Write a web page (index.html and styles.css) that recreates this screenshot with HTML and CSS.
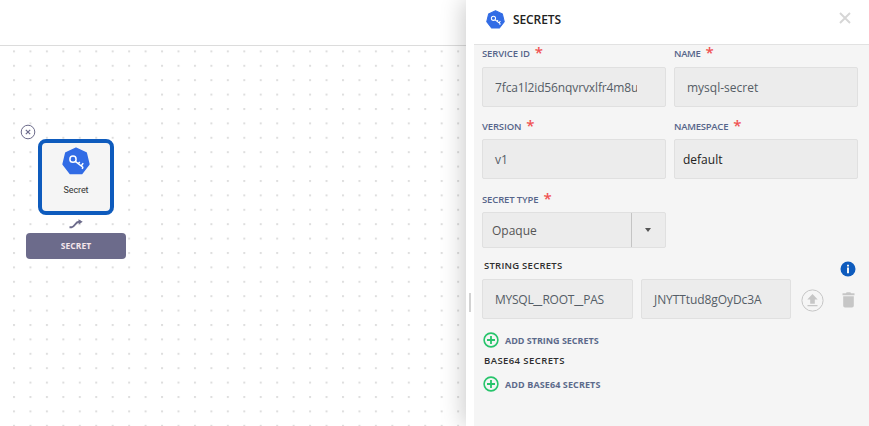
FILE: index.html
```html
<!DOCTYPE html>
<html lang="en">
<head>
<meta charset="utf-8">
<title>Secrets</title>
<link rel="stylesheet" href="styles.css">
</head>
<body>
<svg class="defs" width="0" height="0">
  <symbol id="secret" viewBox="0 0 28 28">
    <path fill="#326ce5" stroke="#326ce5" stroke-width="1.5" stroke-linejoin="round" d="M14 1.2 24.2 6 26.9 17.2 19.8 26.5H8.2L1.1 17.2 3.8 6Z"/>
    <g fill="none" stroke="#fff" stroke-width="1.5"><circle cx="11" cy="12.2" r="3.1"/><path d="m13.3 14.4 7.9 6.1M19.2 19l2-2.9M16.3 16.8l1.4-1.9M21 20.4l-.9 1.4"/></g>
  </symbol>
  <symbol id="plus" viewBox="0 0 16 16">
    <g fill="none" stroke="#27c46b"><circle cx="8" cy="8" r="6.9" stroke-width="1.6"/><path stroke-width="1.8" d="M8 4v8M4 8h8"/></g>
  </symbol>
</svg>
<div class="app">
  <main class="workspace">
    <div class="topbar"></div>
    <div class="canvas">
      <svg class="dots" width="466" height="380"><defs><pattern id="grid" x="13" y="4.4" width="16.45" height="14.4" patternUnits="userSpaceOnUse"><rect width="2" height="2" fill="#dedede"/></pattern></defs><rect width="466" height="380" fill="url(#grid)"/></svg>
      <div class="node">
        <svg class="node-close" width="16" height="16" viewBox="0 0 16 16"><circle cx="8" cy="8" r="6.8" fill="#fff" stroke="#6c6b8b" stroke-width="1"/><path d="m5.8 5.8 4.4 4.4m0-4.4-4.4 4.4" stroke="#6c6b8b" stroke-width="1.2"/></svg>
        <div class="node-card"><svg width="28" height="28"><use href="#secret"/></svg><span>Secret</span></div>
        <svg class="node-link" width="14" height="10" viewBox="0 0 14 10"><path d="M.5 8.2h2.2c3 0 3.5-5.4 7.3-5.4h2" fill="none" stroke="#6c6b8b" stroke-width="1.9"/><path d="M9.5.2 13.7 2.8 9.7 5.6Z" fill="#6c6b8b"/></svg>
        <div class="node-tag">SECRET</div>
      </div>
    </div>
  </main>
  <aside class="panel">
    <div class="gutter"><i></i></div>
    <section class="content">
      <header class="head">
        <svg width="19" height="19"><use href="#secret"/></svg><h1>SECRETS</h1>
        <svg class="close" width="12" height="12" viewBox="0 0 12 12"><path d="m1 1 10 10M11 1 1 11" stroke="#d6d6d6" stroke-width="1.9"/></svg>
      </header>
      <div class="form">
        <div class="fields">
          <div class="field first"><label><span class="w-service">SERVICE ID</span><b>*</b></label><div class="input"><span class="clip w-id">7fca1l2id56nqvrvxlfr4m8u</span></div></div>
          <div class="field first"><label><span class="w-name">NAME</span><b>*</b></label><div class="input"><span>mysql-secret</span></div></div>
          <div class="field"><label><span class="w-version">VERSION</span><b>*</b></label><div class="input"><span>v1</span></div></div>
          <div class="field"><label><span class="w-namespace">NAMESPACE</span><b>*</b></label><div class="input dark"><span class="w-default">default</span></div></div>
          <div class="field type"><label><span class="w-type">SECRET TYPE</span><b>*</b></label><div class="input select"><span class="w-opaque">Opaque</span><div class="arrow"><i></i></div></div></div>
        </div>
        <div class="title-row"><h2 class="w-string">STRING SECRETS</h2><svg width="16" height="16" viewBox="0 0 16 16"><circle cx="8" cy="8" r="7.5" fill="#0e5bbd"/><path d="M7 3.7h2v1.7H7zm0 2.9h2v5.6H7z" fill="#f4f4f4"/></svg></div>
        <div class="secret-row">
          <div class="input key"><span class="w-key">MYSQL<i>_</i>ROOT<i>_</i>PAS</span></div>
          <div class="input val"><span class="w-val">JNYTTtud8gOyDc3A</span></div>
          <svg class="upload" width="23" height="23" viewBox="0 0 23 23"><circle cx="11.5" cy="11.5" r="10.6" fill="none" stroke="#c6c6c6"/><path d="m11.5 5 5.2 5.5h-2.9v4.3H9.2v-4.3H6.3ZM6.5 16h10v1.2h-10z" fill="#c6c6c6"/></svg>
          <svg class="trash" width="13" height="16" viewBox="0 0 13 16"><path d="M.5 1.3h3.3L4.7.3h3.6l.9 1h3.3v2H.5ZM1.2 4.3h10.6v9.4q0 1.8-1.8 1.8H3q-1.8 0-1.8-1.8Z" fill="#c6c6c6"/></svg>
        </div>
        <div class="add"><svg width="16" height="16"><use href="#plus"/></svg><span class="w-adds">ADD STRING SECRETS</span></div>
        <h2 class="base w-base">BASE64 SECRETS</h2>
        <div class="add second"><svg width="16" height="16"><use href="#plus"/></svg><span class="w-addb">ADD BASE64 SECRETS</span></div>
      </div>
    </section>
  </aside>
</div>
</body>
</html>
```
FILE: styles.css
```css
* { box-sizing: border-box; }
body { margin: 0; background: #fff; font-family: "Open Sans", sans-serif; color: #333; }
svg { display: block; flex: none; }
.defs { position: absolute; }
.app { display: flex; width: 869px; height: 426px; overflow: hidden; }
.workspace { width: 466px; }
.topbar { height: 46px; border-bottom: 1px solid #dcdcdc; }
.canvas { position: relative; height: 380px; }
.dots { position: absolute; left: 0; top: 0; }
.node { position: absolute; left: 26px; top: 93px; width: 100px; display: flex; flex-direction: column; align-items: center; }
.node-close { position: absolute; left: -6px; top: -15px; }
.node-card { width: 76px; height: 76px; border: 4px solid #0e5bbd; border-radius: 8px; background: #f5f5f5; display: flex; flex-direction: column; align-items: center; padding-top: 4px; }
.node-card span { font: 9px/14px Roboto, sans-serif; margin-top: 8px; letter-spacing: -.1px; }
.node-link { margin-top: 4px; }
.node-tag { width: 100px; height: 26px; margin-top: 4px; border-radius: 4px; background: #6c6b8b; color: #f5e5ea; font-size: 8.5px; font-weight: 700; line-height: 26px; text-align: center; letter-spacing: .05px; }
.panel { width: 403px; display: flex; background: #fff; position: relative; box-shadow: -3px 0 22px rgba(0,0,0,.2); }
.gutter { width: 8px; display: flex; padding: 293px 0 0 3px; }
.gutter i { width: 2px; height: 19px; background: #d2d2d2; }
.content { width: 395px; background: #f5f5f5; }
.head { height: 45px; background: #fff; border-bottom: 1px solid #e2e2e2; display: flex; align-items: center; padding: 0 18px 6px 12px; }
h1 { margin: 2px 0 0 8px; font-size: 12px; font-weight: 600; line-height: 18px; color: #222; letter-spacing: -.1px; }
.close { margin: 0 0 2px auto; }
.form { padding: 0 11px 0 8px; }
.fields { display: grid; grid-template-columns: 184px 184px; column-gap: 8px; row-gap: 10px; }
.type { margin-top: 1px; }
label { height: 22px; display: flex; font-size: 9.5px; font-weight: 600; line-height: 19px; color: #56658a; white-space: nowrap; }
.first label { line-height: 17px; }
label b { color: #f05252; font-size: 15px; font-weight: 600; margin-left: 5px; line-height: 16px; }
.first b { line-height: 14px; }
.input { height: 40px; border: 1px solid #e0e0e0; border-radius: 2px; background: #ececec; display: flex; align-items: center; padding-left: 12px; font-size: 12px; color: #555d66; white-space: nowrap; }
.clip { width: 142px; overflow: hidden; }
.dark { padding-left: 8px; color: #222; }
.select { height: 36px; padding-left: 9px; color: #555; }
.arrow { margin-left: auto; width: 34px; height: 34px; border-left: 1px solid #c4c4c4; display: flex; align-items: center; justify-content: center; }
.arrow i { border: 3.5px solid transparent; border-top: 4px solid #555; border-bottom: 0; margin-right: 1px; }
.title-row { height: 31px; display: flex; justify-content: space-between; padding: 0 2px; }
.title-row svg { margin-top: 13px; }
h2 { margin: 0; font-size: 9.5px; line-height: 14px; font-weight: 600; color: #2e2e2e; white-space: nowrap; }
.title-row h2 { margin-top: 11px; }
.secret-row { display: flex; }
.key { width: 151px; }
.w-key i { display: inline-block; font-style: normal; transform: scaleX(1.7); margin: 0 2px; }
.val { width: 150px; margin-left: 8px; }
.upload { margin: 10px 0 0 10px; }
.trash { margin: 13px 0 0 18px; }
.add { display: flex; align-items: center; height: 16px; margin: 13px 0 0 1px; gap: 6px; font-size: 9px; font-weight: 700; color: #5c6a8b; white-space: nowrap; }
.base { margin: 6px 0 0 2px; }
.second { margin-top: 8px; }
.w-service { letter-spacing: -.13px; }
.w-name { letter-spacing: -.3px; }
.w-version { letter-spacing: -.15px; }
.w-namespace { letter-spacing: -.25px; }
.w-type { letter-spacing: -.13px; }
.w-id { letter-spacing: -.12px; }
.w-key { letter-spacing: -.25px; }
.w-val { letter-spacing: -.08px; }
.w-string { letter-spacing: .25px; }
.w-base { letter-spacing: .42px; }
.w-adds { letter-spacing: -.02px; }
.w-addb { letter-spacing: .1px; }
```
